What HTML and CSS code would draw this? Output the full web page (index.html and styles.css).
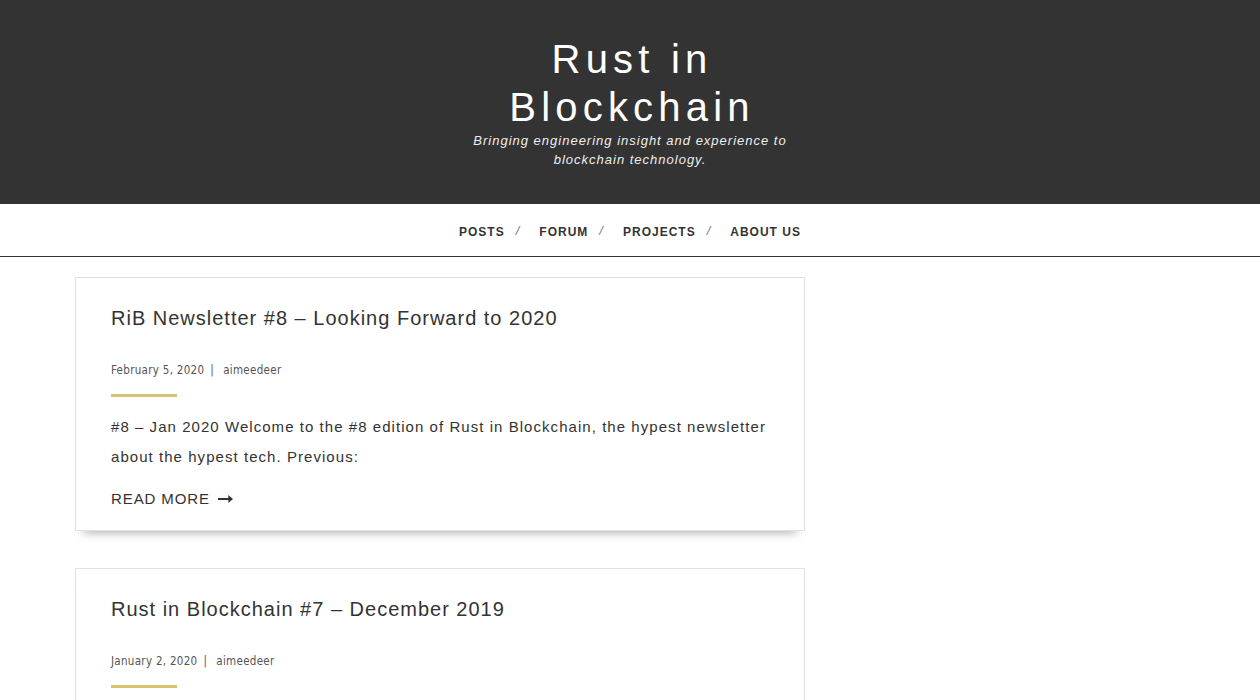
FILE: index.html
```html
<!DOCTYPE html>
<html>
<head>
<meta charset="utf-8">
<title>Rust in Blockchain</title>
<link rel="stylesheet" href="styles.css">
</head>
<body>
<header class="site-header">
  <h1 class="site-title">Rust in Blockchain</h1>
  <p class="tagline">Bringing engineering insight and experience to blockchain technology.</p>
</header>
<nav class="main-nav">
  <a href="#">Posts</a><span class="sep">/</span>
  <a href="#">Forum</a><span class="sep">/</span>
  <a href="#">Projects</a><span class="sep">/</span>
  <a href="#">About Us</a>
</nav>
<main class="content">
  <article class="post">
    <h2 class="post-title">RiB Newsletter #8 – Looking Forward to 2020</h2>
    <div class="meta"><span>February 5, 2020</span><span class="bar">|</span><span>aimeedeer</span></div>
    <div class="rule"></div>
    <p class="excerpt">#8 – Jan 2020 Welcome to the #8 edition of Rust in Blockchain, the hypest newsletter about the hypest tech. Previous:</p>
    <a class="more" href="#">Read More <svg class="arrow" viewBox="0 0 16 10" width="15" height="10"><path d="M0 4h11V0.8L16 5l-5 4.2V6H0z" fill="#333"/></svg></a>
  </article>
  <article class="post">
    <h2 class="post-title">Rust in Blockchain #7 – December 2019</h2>
    <div class="meta"><span>January 2, 2020</span><span class="bar">|</span><span>aimeedeer</span></div>
    <div class="rule"></div>
    <p class="excerpt">#7 – Dec 2019 Welcome to the #7 edition of Rust in Blockchain, the hypest newsletter about the hypest tech.</p>
    <a class="more" href="#">Read More <svg class="arrow" viewBox="0 0 16 10" width="15" height="10"><path d="M0 4h11V0.8L16 5l-5 4.2V6H0z" fill="#333"/></svg></a>
  </article>
</main>
</body>
</html>
```
FILE: styles.css
```css
* { box-sizing: border-box; }
html, body { margin: 0; padding: 0; background: #fff; }
body { font-family: "Liberation Sans", Arial, sans-serif; color: #333; }

.site-header {
  background: #333;
  height: 204px;
  padding-top: 35px;
  text-align: center;
}
.site-title {
  margin: 0 auto;
  width: 330px;
  font-weight: 400;
  font-size: 40px;
  line-height: 48px;
  letter-spacing: 5.2px;
  color: #fff;
  padding-left: 4px;
}
.tagline {
  margin: 0 auto;
  width: 330px;
  font-style: italic;
  font-size: 13px;
  line-height: 19px;
  letter-spacing: 1px;
  color: #eee;
}

.main-nav {
  height: 53px;
  border-bottom: 1px solid #333;
  display: flex;
  justify-content: center;
  align-items: center;
  padding-top: 3px;
  padding-left: 0;
}
.main-nav a {
  font-size: 12px;
  font-weight: 700;
  letter-spacing: 1px;
  text-transform: uppercase;
  color: #333;
  text-decoration: none;
}
.main-nav .sep {
  font-size: 13px;
  font-style: italic;
  color: #777;
  margin: 0 20px 0 11px;
  position: relative;
  top: -1px;
}

.content {
  width: 730px;
  margin-left: 75px;
  padding-top: 20px;
}
.post {
  border: 1px solid #e2e2e2;
  padding: 27px 28px 22px 35px;
  margin-bottom: 37px;
  background: #fff;
  box-shadow: 0 10px 9px -8px rgba(0,0,0,0.3);
}
.post-title {
  margin: 0;
  font-weight: 400;
  font-size: 20px;
  line-height: 26px;
  letter-spacing: 1px;
  color: #333;
}
.meta {
  margin-top: 32px;
  font-family: "DejaVu Sans", sans-serif;
  font-stretch: condensed;
  font-size: 11.5px;
  letter-spacing: 0.3px;
  color: #555;
  line-height: 14px;
}
.meta .bar { margin: 0 9px 0 6px; }
.rule {
  width: 66px;
  height: 3px;
  background: #d8c46c;
  margin-top: 17px;
}
.excerpt {
  margin: 15px 0 0;
  font-size: 15px;
  line-height: 30px;
  letter-spacing: 1.05px;
  color: #333;
}
.more {
  display: inline-flex;
  align-items: center;
  gap: 8px;
  margin-top: 18px;
  font-size: 15px;
  letter-spacing: 0.9px;
  text-transform: uppercase;
  color: #333;
  text-decoration: none;
}
```
